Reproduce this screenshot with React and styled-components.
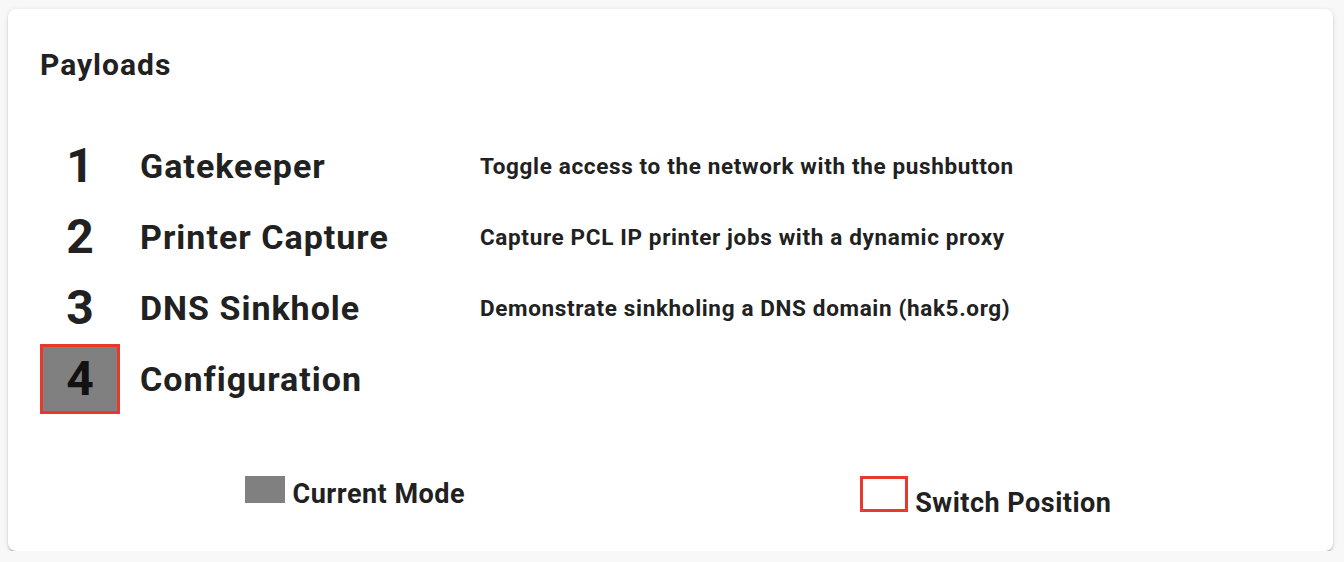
import React from 'react';
import styled, { createGlobalStyle } from 'styled-components';

const GlobalStyle = createGlobalStyle`
  html, body {
    margin: 0;
    padding: 0;
    background: #f8f8f8;
  }
  body {
    font-family: Roboto, "Liberation Sans", Arial, sans-serif;
    color: #212121;
  }
`;

const Page = styled.div`
  padding: 9px 11px 0 8px;
`;

const Card = styled.section`
  background: #fff;
  border-radius: 8px;
  box-shadow: 0 3px 1px -2px rgba(0, 0, 0, 0.2), 0 2px 2px 0 rgba(0, 0, 0, 0.14),
    0 1px 5px 0 rgba(0, 0, 0, 0.12);
  padding: 40px 32px 32px;
  box-sizing: border-box;
  height: 542px;
`;

const Title = styled.h2`
  margin: 0 0 49px;
  font-size: 30px;
  line-height: 32px;
  letter-spacing: 1px;
  font-weight: 700;
`;

const Table = styled.div`
  display: flex;
  flex-direction: column;
  margin-bottom: 62px;
`;

const Row = styled.div`
  display: grid;
  grid-template-columns: 100px 340px 1fr;
  align-items: center;
  height: 71px;
`;

const Num = styled.div`
  width: 80px;
  height: 70px;
  box-sizing: border-box;
  display: flex;
  align-items: center;
  justify-content: center;
  font-size: 48px;
  font-weight: 700;
  background: ${(p) => (p.$current ? '#808080' : 'transparent')};
  border: 3px solid ${(p) => (p.$switch ? '#e83a2c' : 'transparent')};
  color: ${(p) => (p.$current ? '#111' : '#212121')};
`;

const Name = styled.div`
  font-size: 34px;
  letter-spacing: 1px;
  font-weight: 700;
`;

const Desc = styled.div`
  font-size: 22.5px;
  letter-spacing: 0.65px;
  font-weight: 700;
`;

const Legend = styled.div`
  display: grid;
  grid-template-columns: 1fr 1fr;
  align-items: start;
`;

const LegendItem = styled.div`
  text-align: center;
  font-size: 27px;
  letter-spacing: 0.5px;
  font-weight: 700;
`;

const Swatch = styled.span`
  display: inline-block;
  box-sizing: border-box;
  width: ${(p) => (p.$switch ? 48 : 40)}px;
  height: ${(p) => (p.$switch ? 36 : 27)}px;
  background: ${(p) => (p.$switch ? 'transparent' : '#808080')};
  border: ${(p) => (p.$switch ? '3px solid #e83a2c' : 'none')};
`;

const payloads = [
  { n: 1, name: 'Gatekeeper', desc: 'Toggle access to the network with the pushbutton' },
  { n: 2, name: 'Printer Capture', desc: 'Capture PCL IP printer jobs with a dynamic proxy' },
  { n: 3, name: 'DNS Sinkhole', desc: 'Demonstrate sinkholing a DNS domain (hak5.org)' },
  { n: 4, name: 'Configuration', desc: '' },
];

const currentMode = 4;
const switchPosition = 4;

export default function App() {
  return (
    <Page>
      <GlobalStyle />
      <Card>
        <Title>Payloads</Title>
        <Table>
          {payloads.map((p) => (
            <Row key={p.n}>
              <Num $current={p.n === currentMode} $switch={p.n === switchPosition}>
                {p.n}
              </Num>
              <Name>{p.name}</Name>
              <Desc>{p.desc}</Desc>
            </Row>
          ))}
        </Table>
        <Legend>
          <LegendItem>
            <Swatch /> Current Mode
          </LegendItem>
          <LegendItem>
            <Swatch $switch /> Switch Position
          </LegendItem>
        </Legend>
      </Card>
    </Page>
  );
}
